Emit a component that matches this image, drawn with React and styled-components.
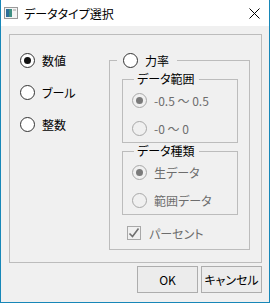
import React from 'react';
import styled, {createGlobalStyle} from 'styled-components';

const GlobalStyle = createGlobalStyle`
	body {
		margin: 0;
		background: #fff;
	}
	* {
		box-sizing: border-box;
	}
`;

const teal = '#1787b8';
const line = '#bcbcbc';

const Window = styled.div`
	width: 270px;
	height: 303px;
	display: flex;
	flex-direction: column;
	border: 1px solid ${teal};
	border-top: none;
	background: #f0f0f0;
	color: #000;
	font-family: "Noto Sans CJK JP", "Noto Sans", sans-serif;
	font-size: 12px;
	font-feature-settings: "palt";
`;

const TitleBar = styled.div`
	height: 26px;
	flex: none;
	display: flex;
	align-items: center;
	padding: 0 9px 0 3px;
	background: #fff;
`;

const Title = styled.span`
	margin-left: 6px;
	font-size: 12px;
`;

const Close = styled.svg`
	margin-left: auto;
`;

const Body = styled.div`
	flex: 1;
	display: flex;
	flex-direction: column;
	padding: 8px 7px 0 8px;
`;

const Frame = styled.div`
	height: 229px;
	display: flex;
	align-items: flex-start;
	border: 1px solid ${line};
`;

const LeftColumn = styled.div`
	width: 99px;
	flex: none;
	display: flex;
	flex-direction: column;
	gap: 12px;
	padding: 15px 0 0 10px;
`;

const Option = styled.label`
	height: 20px;
	display: flex;
	align-items: center;
	gap: 7px;
	color: ${p => (p.$disabled ? '#6d6d6d' : '#000')};
	white-space: nowrap;
`;

const RadioMark = styled.span`
	width: 15px;
	height: 15px;
	flex: none;
	display: flex;
	align-items: center;
	justify-content: center;
	border-radius: 50%;
	border: 1px solid ${p => (p.$disabled ? '#a8a8a8' : '#333')};
	background: ${p => (p.$disabled ? '#f0f0f0' : '#fff')};

	&::after {
		content: '';
		width: 7px;
		height: 7px;
		border-radius: 50%;
		background: ${p => (p.$disabled ? '#7a7a7a' : '#111')};
		display: ${p => (p.$checked ? 'block' : 'none')};
	}
`;

const PowerGroup = styled.fieldset`
	width: 141px;
	flex: none;
	margin: 17px 0 0 0;
	min-width: 0;
	padding: 3px 11px 6px 12px;
	border: 1px solid ${line};
`;

const PowerCaption = styled.legend`
	margin-left: -5px;
	padding: 0 8px 0 6px;
	height: 16px;
	display: flex;
	align-items: center;
`;

const SubGroup = styled.fieldset`
	margin: 0;
	min-width: 0;
	width: 116px;
	display: flex;
	flex-direction: column;
	gap: 8px;
	padding: 3px 0 4px 9px;
	border: 1px solid ${line};
`;

const SubCaption = styled.legend`
	margin-left: 2px;
	padding: 0 4px 0 3px;
	height: 16px;
	line-height: 16px;
	color: #000;
`;

const CheckRow = styled(Option)`
	margin: 8px 0 0 5px;
	gap: 8px;
`;

const CheckMark = styled.span`
	width: 14px;
	height: 14px;
	flex: none;
	display: flex;
	align-items: center;
	justify-content: center;
	border: 1px solid #a8a8a8;
	background: #f0f0f0;
`;

const ButtonRow = styled.div`
	display: flex;
	justify-content: flex-end;
	gap: 3px;
	margin-top: 3px;
`;

const Button = styled.button`
	width: 61px;
	height: 27px;
	padding: 0;
	border: 1px solid #adadad;
	background: #ececec;
	color: #000;
	font: inherit;
	font-feature-settings: "palt";
`;

function AppIcon() {
	return (
		<svg width="14" height="12" viewBox="0 0 14 12">
			<rect x="0.5" y="0.5" width="13" height="11" fill="#f4f4f4" stroke="#9a9a9a" />
			<rect x="2" y="2" width="6" height="8" fill="#3f8f82" />
			<rect x="2" y="2" width="3" height="8" fill="#2e6f9a" />
			<rect x="9" y="2" width="3" height="2" fill="#c9c9c9" />
		</svg>
	);
}

function Radio({checked, disabled, children}) {
	return (
		<Option $disabled={disabled}>
			<RadioMark $checked={checked} $disabled={disabled} />
			{children}
		</Option>
	);
}

export default function App() {
	return (
		<>
			<GlobalStyle />
			<Window>
				<TitleBar>
					<AppIcon />
					<Title>データタイプ選択</Title>
					<Close width="11" height="11" viewBox="0 0 11 11">
						<path d="M0.5 0.5 L10.5 10.5 M10.5 0.5 L0.5 10.5" stroke="#000" strokeWidth="1" />
					</Close>
				</TitleBar>
				<Body>
					<Frame>
						<LeftColumn>
							<Radio checked>数値</Radio>
							<Radio>ブール</Radio>
							<Radio>整数</Radio>
						</LeftColumn>
						<PowerGroup>
							<PowerCaption>
								<Radio>力率</Radio>
							</PowerCaption>
							<SubGroup>
								<SubCaption>データ範囲</SubCaption>
								<Radio checked disabled>-0.5 ～ 0.5</Radio>
								<Radio disabled>-0 ～ 0</Radio>
							</SubGroup>
							<SubGroup>
								<SubCaption>データ種類</SubCaption>
								<Radio checked disabled>生データ</Radio>
								<Radio disabled>範囲データ</Radio>
							</SubGroup>
							<CheckRow $disabled>
								<CheckMark>
									<svg width="12" height="12" viewBox="0 0 12 12">
										<path d="M1.5 6.5 L4.5 9.5 L10.5 1.5" fill="none" stroke="#6f6f6f" strokeWidth="1.6" />
									</svg>
								</CheckMark>
								パーセント
							</CheckRow>
						</PowerGroup>
					</Frame>
					<ButtonRow>
						<Button>OK</Button>
						<Button>キャンセル</Button>
					</ButtonRow>
				</Body>
			</Window>
		</>
	);
}
